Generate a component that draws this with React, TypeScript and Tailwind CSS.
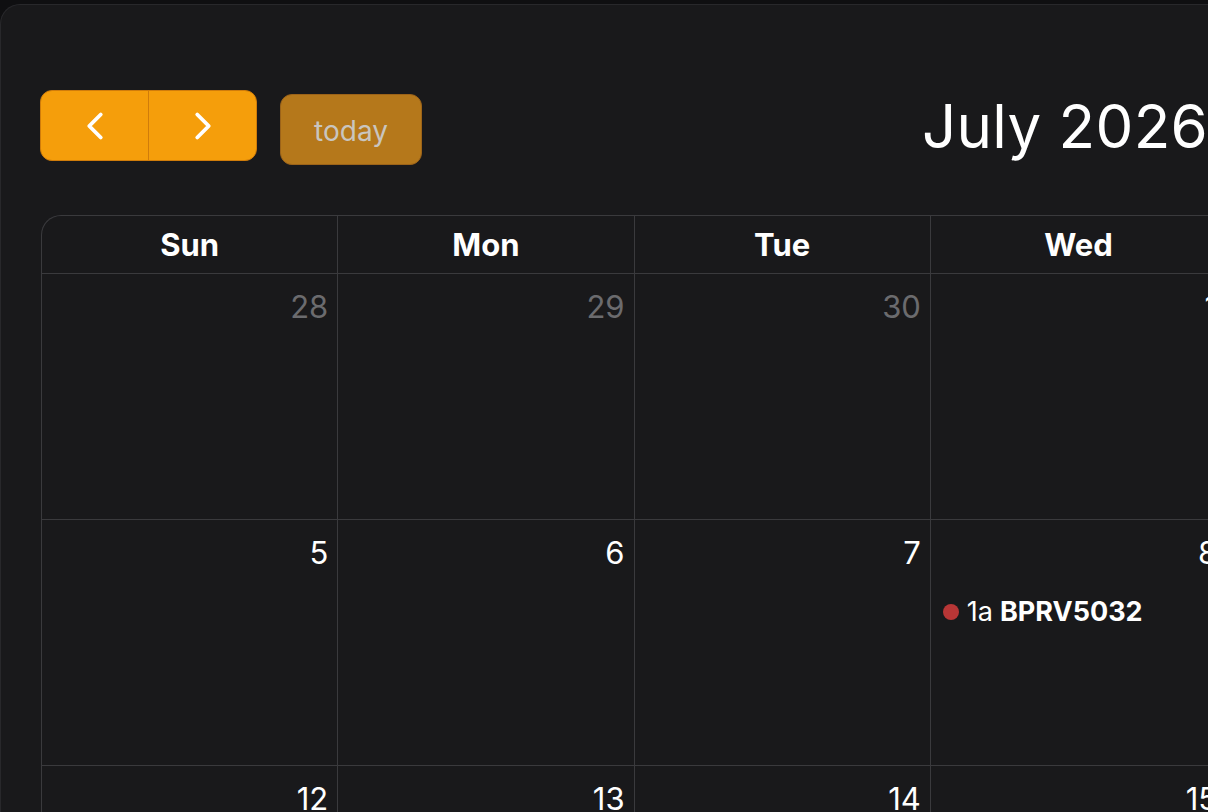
import { ChevronLeft, ChevronRight } from "lucide-react";

type Day = { n: number; muted?: boolean };

const weeks: Day[][] = [
  [{ n: 28, muted: true }, { n: 29, muted: true }, { n: 30, muted: true }, { n: 1 }, { n: 2 }, { n: 3 }, { n: 4 }],
  [5, 6, 7, 8, 9, 10, 11].map((n) => ({ n })),
  [12, 13, 14, 15, 16, 17, 18].map((n) => ({ n })),
  [19, 20, 21, 22, 23, 24, 25].map((n) => ({ n })),
];

const headers = ["Sun", "Mon", "Tue", "Wed", "Thu", "Fri", "Sat"];

// events keyed by day of month
const events: Record<number, { time: string; title: string }[]> = {
  8: [{ time: "1a", title: "BPRV5032" }],
};

export default function App() {
  return (
    <div className="h-[812px] w-[1208px] overflow-hidden bg-[#0f0f11] pt-[4px] font-['Inter','Noto_Sans',sans-serif] text-white">
      <div className="w-[2160px] rounded-tl-[20px] border-l border-t border-[#28282b] bg-[#19191b] pl-[39px] pt-[85px]">
        {/* toolbar */}
        <div className="grid w-[2076px] grid-cols-[1fr_auto_1fr] items-start">
          <div className="flex items-start gap-[23px]">
            <div className="flex h-[71px] w-[217px] overflow-hidden rounded-[12px] border border-[#d07c0a] bg-[#f59e0b]">
              <button className="flex flex-1 items-center justify-center border-r border-[#d07c0a]">
                <ChevronLeft className="h-[46px] w-[46px] text-white" strokeWidth={2} />
              </button>
              <button className="flex flex-1 items-center justify-center">
                <ChevronRight className="h-[46px] w-[46px] text-white" strokeWidth={2} />
              </button>
            </div>
            <button className="mt-[4px] flex h-[71px] w-[142px] items-center justify-center rounded-[12px] border border-[#9c6319] bg-[#b5781b] pt-[2px] text-[28px] text-[#c9c5bf]">
              today
            </button>
          </div>
          <h2 className="mr-[26px] mt-[6px] text-[60px] font-normal leading-[60px] tracking-[0.3px]">July 2026</h2>
          <div />
        </div>

        {/* month grid */}
        <div className="mt-[50px] ml-[1px] w-[2075px] overflow-hidden rounded-tl-[20px] border-l border-t border-[#3a3a3d]">
          <div className="grid grid-cols-7">
            {headers.map((h) => (
              <div
                key={h}
                className="flex h-[58px] items-center justify-center border-b border-r border-[#3a3a3d] pt-[2px] text-[31px] font-bold"
              >
                {h}
              </div>
            ))}
          </div>
          {weeks.map((week, wi) => (
            <div key={wi} className="grid grid-cols-7">
              {week.map((d, di) => (
                <div key={di} className="h-[246px] border-b border-r border-[#3a3a3d]">
                  <div
                    className={`pr-[9px] pt-[15px] text-right text-[31px] leading-[36px] ${
                      d.muted ? "text-[#6b6b6e]" : "text-white"
                    }`}
                  >
                    {d.n}
                  </div>
                  {!d.muted &&
                    events[d.n]?.map((ev) => (
                      <div key={ev.title} className="mt-[23px] flex items-center pl-[12px] text-[27px] leading-[36px]">
                        <span className="mr-[8px] h-[16px] w-[16px] rounded-full bg-[#b83636]" />
                        <span>{ev.time}</span>
                        <span className="ml-[7px] font-bold">{ev.title}</span>
                      </div>
                    ))}
                </div>
              ))}
            </div>
          ))}
        </div>
      </div>
    </div>
  );
}
